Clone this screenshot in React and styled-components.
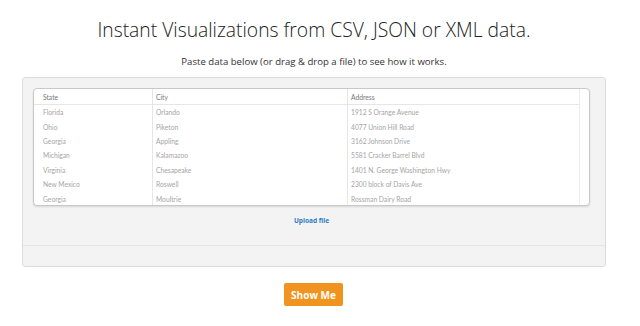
import { createGlobalStyle } from "styled-components";
import styled from "styled-components";

const rows = [
  ["Florida", "Orlando", "1912 S Orange Avenue"],
  ["Ohio", "Piketon", "4077 Union Hill Road"],
  ["Georgia", "Appling", "3162 Johnson Drive"],
  ["Michigan", "Kalamazoo", "5581 Cracker Barrel Blvd"],
  ["Virginia", "Chesapeake", "1401 N. George Washington Hwy"],
  ["New Mexico", "Roswell", "2300 block of Davis Ave"],
  ["Georgia", "Moultrie", "Rossman Dairy Road"],
];

function App() {
  return (
    <>
      <GlobalStyle />
      <Page>
        <Title>Instant Visualizations from CSV, JSON or XML data.</Title>
        <Subtitle>Paste data below (or drag &amp; drop a file) to see how it works.</Subtitle>
        <Panel>
          <PanelBody>
            <TableBox>
              <Table>
                <thead>
                  <tr>
                    <Th $first>State</Th>
                    <Th>City</Th>
                    <Th>Address</Th>
                  </tr>
                </thead>
                <tbody>
                  {rows.map((r, i) => (
                    <tr key={i}>
                      <Td $first>{r[0]}</Td>
                      <Td>{r[1]}</Td>
                      <Td>{r[2]}</Td>
                    </tr>
                  ))}
                </tbody>
              </Table>
            </TableBox>
            <Upload href="#">Upload file</Upload>
          </PanelBody>
          <PanelFooter />
        </Panel>
        <ShowButton>Show Me</ShowButton>
      </Page>
    </>
  );
}

const GlobalStyle = createGlobalStyle`
  body {
    margin: 0;
    background: #fff;
    font-family: 'Open Sans', Arial, sans-serif;
  }
`;

const Page = styled.main`
  width: 628px;
  display: flex;
  flex-direction: column;
  align-items: center;
`;

const Title = styled.h1`
  margin: 15px 0 0;
  font-size: 19.3px;
  line-height: 30px;
  font-weight: 300;
  color: #222;
`;

const Subtitle = styled.p`
  margin: 10px 0 0;
  font-size: 9.6px;
  line-height: 14px;
  color: #333;
`;

const Panel = styled.section`
  align-self: flex-start;
  width: 584px;
  margin: 8px 0 0 22px;
  box-sizing: border-box;
  background: #f3f3f3;
  border: 1px solid #dcdcdc;
  border-radius: 3px;
`;

const PanelBody = styled.div`
  padding: 10px 15px 0 10px;
  height: 167px;
  box-sizing: border-box;
  display: flex;
  flex-direction: column;
  align-items: center;
`;

const PanelFooter = styled.div`
  height: 20px;
  border-top: 1px solid #e4e4e4;
`;

const TableBox = styled.div`
  width: 100%;
  height: 118px;
  box-sizing: border-box;
  background: #fff;
  border: 1px solid #c9c9c9;
  border-radius: 4px;
  box-shadow: 0 1px 2px rgba(0, 0, 0, 0.12);
  padding-right: 9px;
  overflow: hidden;
`;

const Table = styled.table`
  width: 100%;
  border-collapse: collapse;
  font-family: 'Lato', 'Open Sans', sans-serif;
  font-size: 6.7px;
  table-layout: fixed;
  border-right: 1px solid #ececec;
`;

const Th = styled.th`
  text-align: left;
  font-weight: 400;
  color: #777;
  height: 15px;
  padding: 0 0 0 ${(p) => (p.$first ? "9px" : "3px")};
  border-bottom: 1px solid #e6e6e6;
  border-left: ${(p) => (p.$first ? "none" : "1px solid #e6e6e6")};
  width: ${(p) => (p.$first ? "109px" : "auto")};
  &:nth-child(2) {
    width: 191px;
  }
`;

const Td = styled.td`
  color: #a5a5a5;
  height: 14.4px;
  padding: 0 0 0 ${(p) => (p.$first ? "9px" : "3px")};
  border-left: ${(p) => (p.$first ? "none" : "1px solid #e6e6e6")};
  white-space: nowrap;
  overflow: hidden;
`;

const Upload = styled.a`
  margin-top: 10px;
  font-family: 'Open Sans', Arial, sans-serif;
  font-size: 6.5px;
  font-weight: 700;
  line-height: 9px;
  color: #2b7bc4;
  text-decoration: none;
`;

const ShowButton = styled.button`
  margin: 16px 0 0 -1px;
  width: 59px;
  height: 23px;
  border: none;
  border-radius: 2px;
  background: #f0931f;
  color: #fff;
  font-family: 'Open Sans', Arial, sans-serif;
  font-size: 10px;
  font-weight: 700;
  white-space: nowrap;
  padding: 0;
  cursor: pointer;
`;

export default App;
